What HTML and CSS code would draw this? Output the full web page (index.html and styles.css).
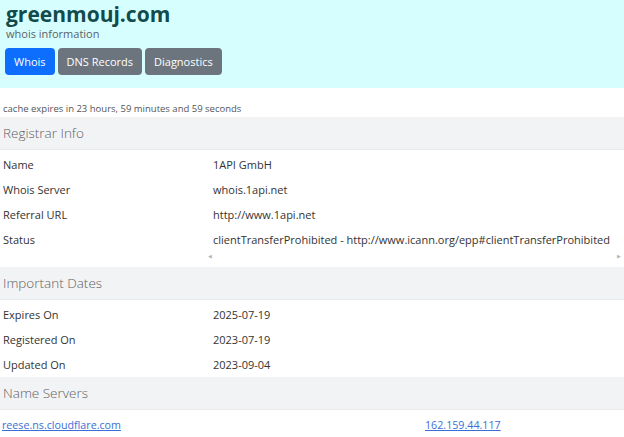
FILE: index.html
```html
<!DOCTYPE html>
<html lang="en">
<head>
    <meta charset="UTF-8">
    <meta name="viewport" content="width=device-width, initial-scale=1.0">
    <title>greenmouj.com - whois information</title>
    <link rel="stylesheet" href="styles.css">
</head>
<body>
    <div class="top">
        <h1 class="domain">greenmouj.com</h1>
        <div class="subtitle">whois information</div>
        <div class="tabs">
            <button class="tab active">Whois</button>
            <button class="tab">DNS Records</button>
            <button class="tab">Diagnostics</button>
        </div>
    </div>

    <p class="cache">cache expires in 23 hours, 59 minutes and 59 seconds</p>

    <div class="section">
        <div class="section-title">Registrar Info</div>
        <div class="rows">
            <div class="row"><div class="label">Name</div><div class="value">1API GmbH</div></div>
            <div class="row"><div class="label">Whois Server</div><div class="value">whois.1api.net</div></div>
            <div class="row"><div class="label">Referral URL</div><div class="value">http://www.1api.net</div></div>
            <div class="row"><div class="label">Status</div><div class="value">clientTransferProhibited - http://www.icann.org/epp#clientTransferProhibited</div></div>
        </div>
        <div class="scroller">
            <span class="arrow">&#9664;</span>
            <span class="arrow">&#9654;</span>
        </div>
    </div>

    <div class="section">
        <div class="section-title">Important Dates</div>
        <div class="rows">
            <div class="row"><div class="label">Expires On</div><div class="value">2025-07-19</div></div>
            <div class="row"><div class="label">Registered On</div><div class="value">2023-07-19</div></div>
            <div class="row"><div class="label">Updated On</div><div class="value">2023-09-04</div></div>
        </div>
    </div>

    <div class="section">
        <div class="section-title">Name Servers</div>
        <div class="rows">
            <div class="row ns"><a href="#">reese.ns.cloudflare.com</a><a href="#">162.159.44.117</a></div>
        </div>
    </div>
</body>
</html>
```

FILE: styles.css
```css
body {
    margin: 0;
    font-family: "Open Sans", "Noto Sans", sans-serif;
    color: #212529;
    background-color: #fff;
}
.top {
    background-color: #d7fefe;
    padding: 2px 5px 0;
    height: 88px;
    box-sizing: border-box;
}
.domain {
    margin: 0;
    padding-left: 1px;
    font-size: 21px;
    font-weight: 700;
    color: #124b4b;
    line-height: 24px;
}
.subtitle {
    margin-top: 1px;
    padding-left: 1px;
    font-size: 11px;
    color: #5a6266;
    line-height: 14px;
}
.tabs {
    display: flex;
    gap: 3px;
    margin-top: 7px;
}
.tab {
    font-family: inherit;
    font-size: 11px;
    color: #fff;
    background-color: #6c757d;
    border: none;
    border-radius: 4px;
    height: 27px;
    padding: 0 9px;
}
.tab.active {
    background-color: #0d6efd;
}
.cache {
    margin: 0;
    padding: 14px 3px 2px;
    font-size: 9.5px;
    line-height: 13px;
    color: #555;
}
.section-title {
    background-color: #f2f3f4;
    border-bottom: 1px solid #e9eaeb;
    height: 32px;
    line-height: 32px;
    padding: 0 3px;
    font-size: 13.5px;
    color: #5e6266;
    font-weight: 300;
}
.rows {
    padding-top: 2px;
}
.row {
    display: grid;
    grid-template-columns: 210px 1fr;
    height: 25px;
    line-height: 26px;
    font-size: 11px;
    color: #333;
    padding-left: 3px;
}
.label {
    white-space: nowrap;
}
.value {
    white-space: nowrap;
}
.scroller {
    display: flex;
    justify-content: space-between;
    padding: 0 3px 0 208px;
    height: 15px;
    line-height: 8px;
}
.arrow {
    font-size: 5px;
    color: #b5b5b5;
}
.ns {
    grid-template-columns: 423px 1fr;
    padding-left: 2px;
    height: 26px;
    line-height: 26px;
    font-size: 10.7px;
}
.ns a {
    color: #3b6fd8;
}
```
